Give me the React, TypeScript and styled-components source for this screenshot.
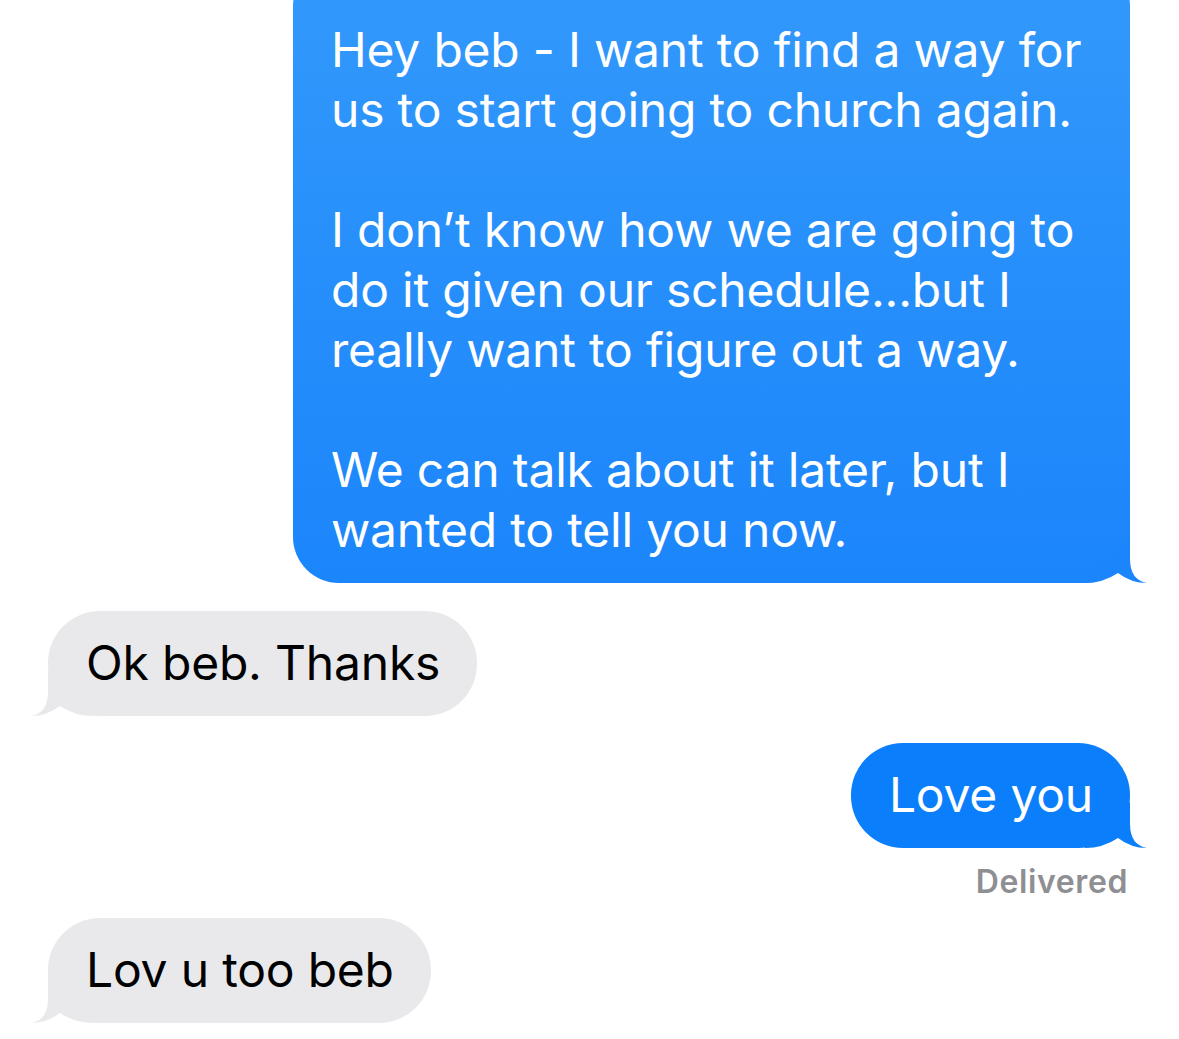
import React from "react";
import styled, { createGlobalStyle } from "styled-components";

const GlobalStyle = createGlobalStyle`
  html, body {
    margin: 0;
    padding: 0;
    background: #ffffff;
  }
  body {
    font-family: Inter, "Noto Sans", "Liberation Sans", sans-serif;
    -webkit-font-smoothing: antialiased;
  }
`;

type Side = "out" | "in";

const Thread = styled.div`
  display: flex;
  flex-direction: column;
  padding: 0 49px 0 48px;
  overflow: hidden;
  height: 1039px;
  box-sizing: border-box;
`;

const Row = styled.div<{ $side: Side; $gap: number }>`
  display: flex;
  flex-direction: column;
  align-items: ${(p) => (p.$side === "out" ? "flex-end" : "flex-start")};
  margin-top: ${(p) => p.$gap}px;
`;

const Bubble = styled.div<{ $side: Side; $long?: boolean }>`
  position: relative;
  box-sizing: border-box;
  font-size: 48px;
  line-height: 60px;
  letter-spacing: -0.2px;
  padding: 22px 37px 23px 38px;
  border-radius: 52px;
  white-space: pre-line;
  color: ${(p) => (p.$side === "out" ? "#ffffff" : "#000000")};
  background: ${(p) =>
    p.$side === "in"
      ? "#e9e9eb"
      : p.$long
      ? "linear-gradient(180deg, #3399fb 0%, #1b85fb 100%)"
      : "#0b7efb"};
`;

const LongBubble = styled(Bubble)`
  width: 837px;
  margin-top: -40px;
  padding-top: 60px;
  border-radius: 46px;
`;

const Tail = styled.svg<{ $side: Side }>`
  position: absolute;
  bottom: 0;
  width: 62px;
  height: 46px;
  overflow: visible;
  ${(p) => (p.$side === "out" ? "right: -17px;" : "left: -17px; transform: scaleX(-1);")}
`;

const Status = styled.div`
  margin-top: 14px;
  margin-right: 2px;
  font-size: 32px;
  font-weight: 600;
  color: #8e8e93;
  letter-spacing: 0.6px;
`;

function BubbleTail({ side, color }: { side: Side; color: string }) {
  return (
    <Tail $side={side} viewBox="0 0 62 46" aria-hidden>
      <path
        d="M45 0 L45 22 Q45 43 62 46 Q46 46 33 36 Q18 46 0 46 L0 45 Z"
        fill={color}
      />
    </Tail>
  );
}

export default function App() {
  return (
    <>
      <GlobalStyle />
      <Thread>
        <Row $side="out" $gap={0}>
          <LongBubble $side="out" $long>
            {`Hey beb - I want to find a way for
us to start going to church again.

I don\u2019t know how we are going to
do it given our schedule...but I
really want to figure out a way.

We can talk about it later, but I
wanted to tell you now.`}
            <BubbleTail side="out" color="#1b85fb" />
          </LongBubble>
        </Row>
        <Row $side="in" $gap={28}>
          <Bubble $side="in">
            Ok beb. Thanks
            <BubbleTail side="in" color="#e9e9eb" />
          </Bubble>
        </Row>
        <Row $side="out" $gap={27}>
          <Bubble $side="out">
            Love you
            <BubbleTail side="out" color="#0b7efb" />
          </Bubble>
          <Status>Delivered</Status>
        </Row>
        <Row $side="in" $gap={17}>
          <Bubble $side="in">
            Lov u too beb
            <BubbleTail side="in" color="#e9e9eb" />
          </Bubble>
        </Row>
      </Thread>
    </>
  );
}
